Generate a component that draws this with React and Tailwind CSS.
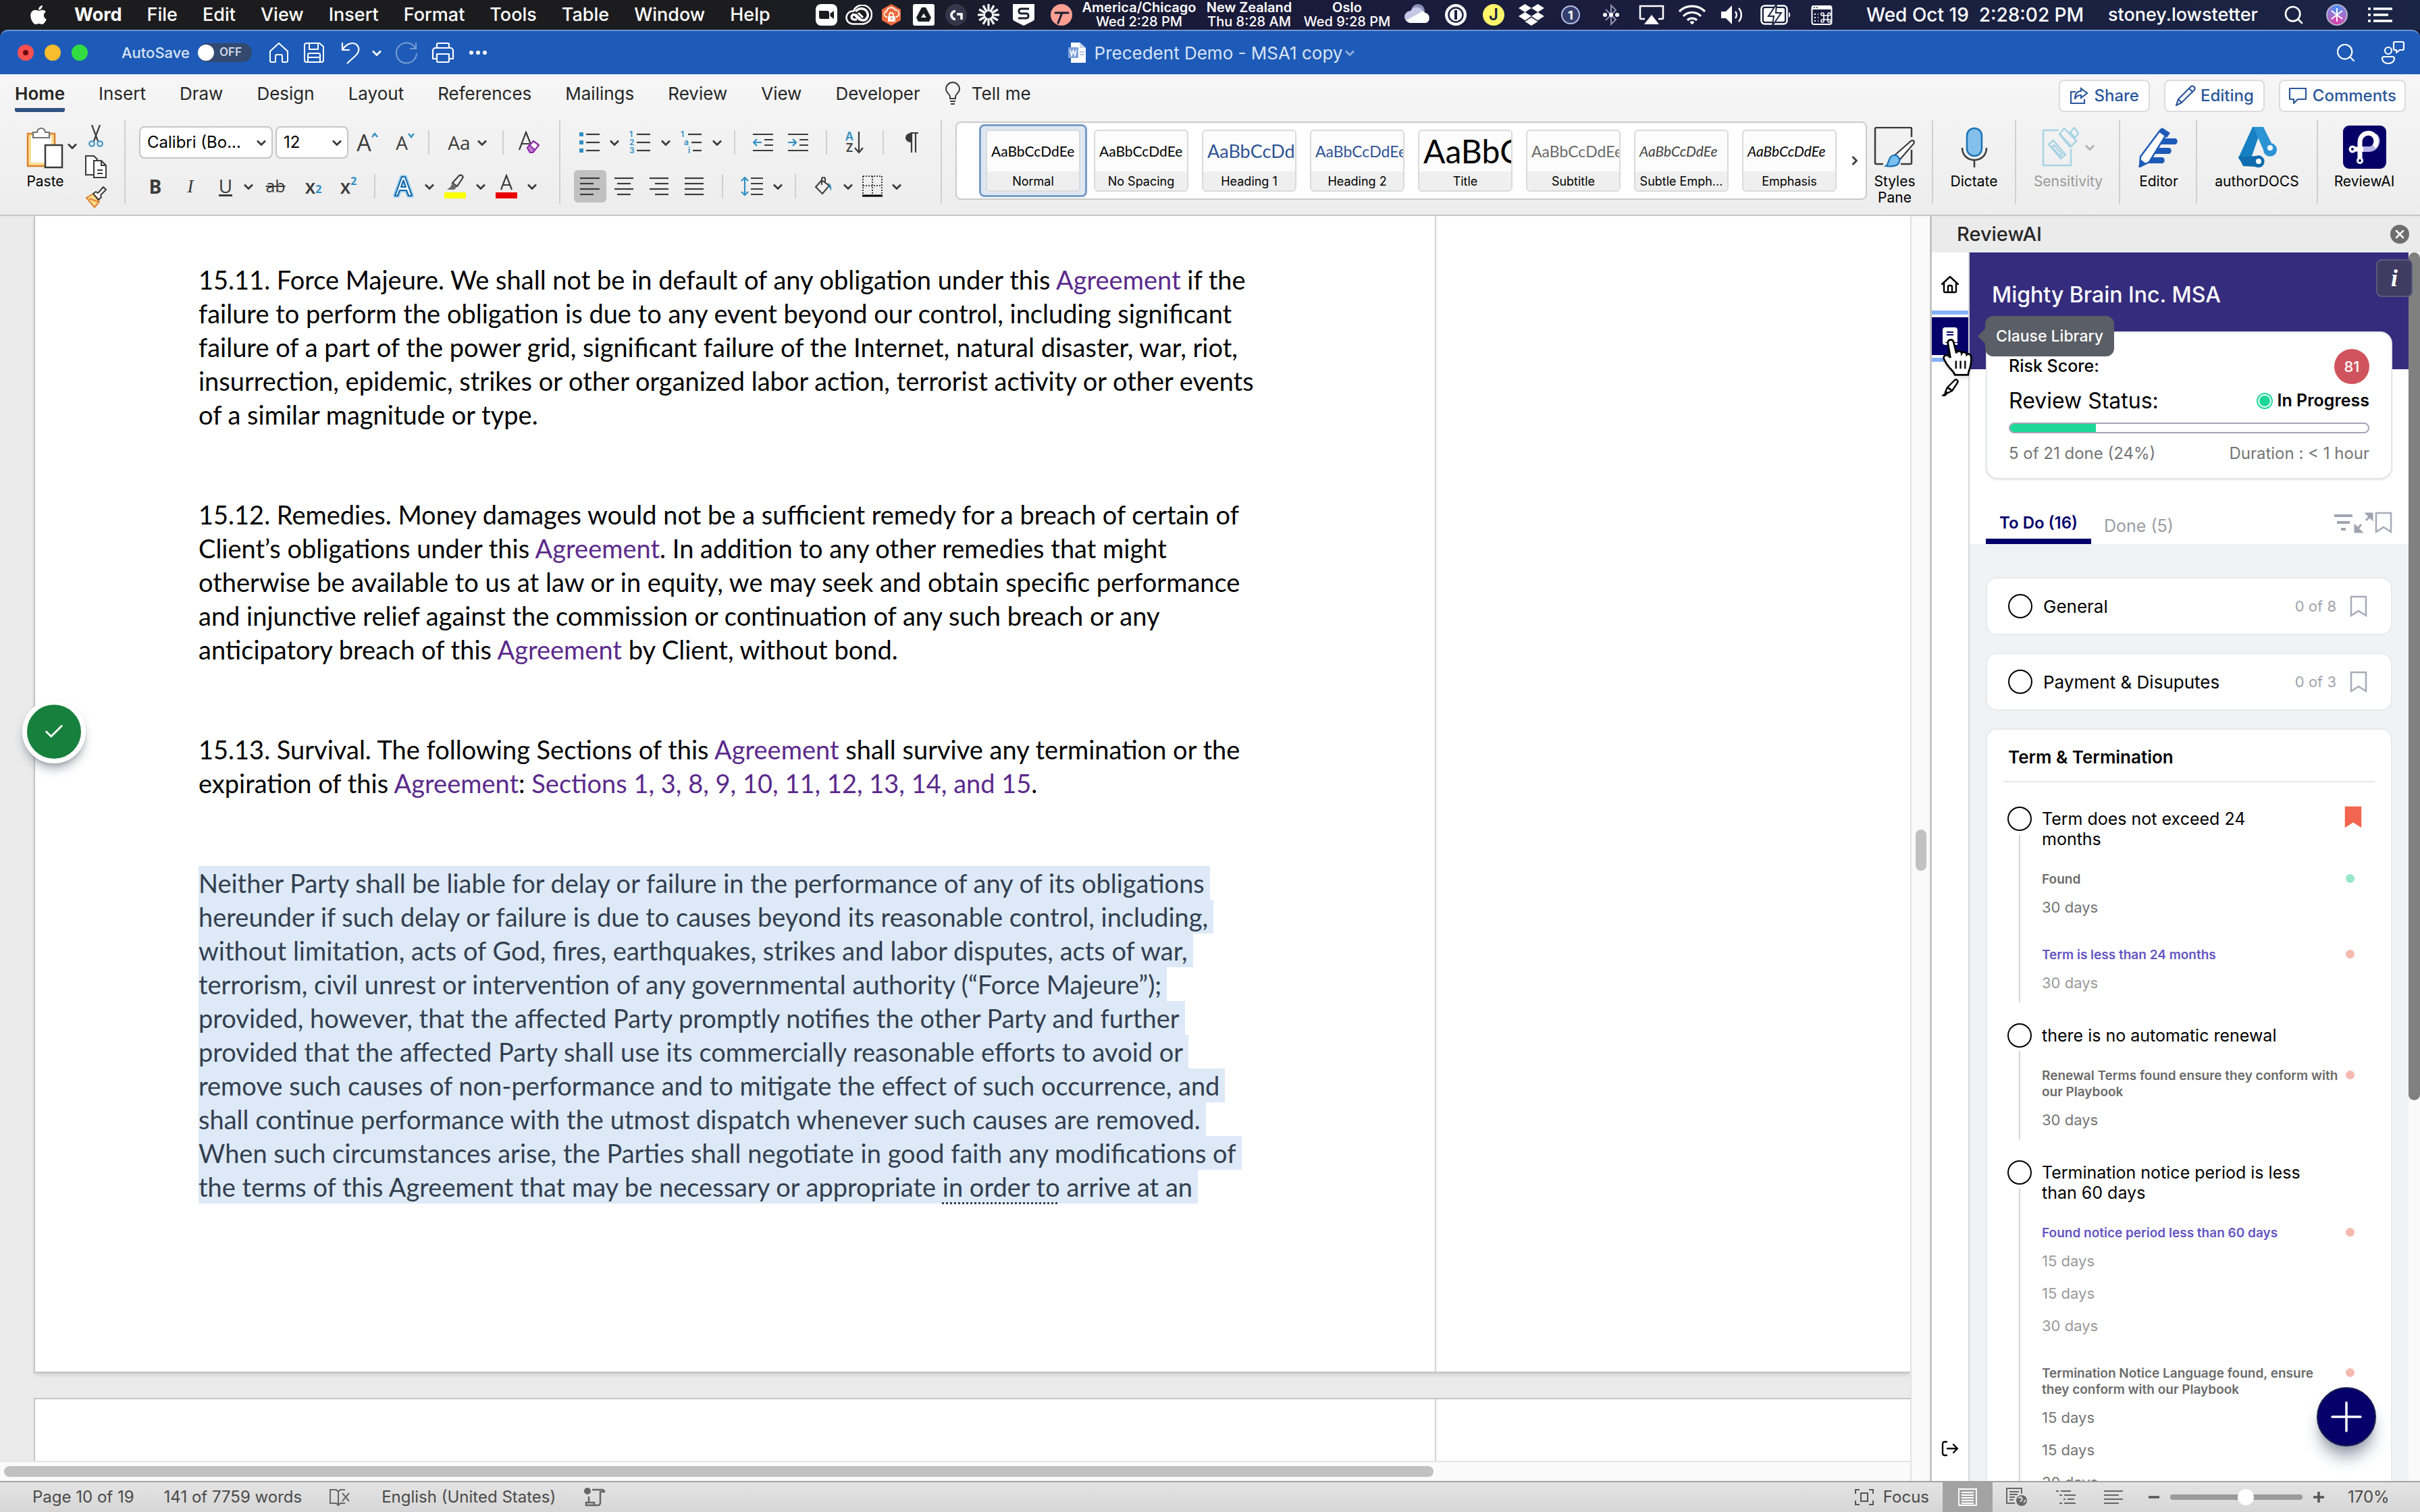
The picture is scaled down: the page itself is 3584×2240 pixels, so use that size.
import React from "react";
import { Search, Check, X } from "lucide-react";
import { FaApple, FaDropbox } from "react-icons/fa";

const menus = ["File", "Edit", "View", "Insert", "Format", "Tools", "Table", "Window", "Help"];

const clocks = [
  { city: "America/Chicago", time: "Wed 2:28 PM", width: "w-[174px]" },
  { city: "New Zealand", time: "Thu 8:28 AM", width: "w-[152px]" },
  { city: "Oslo", time: "Wed 9:28 PM", width: "w-[138px]" },
];

const tabs = ["Home", "Insert", "Draw", "Design", "Layout", "References", "Mailings", "Review", "View", "Developer"];

const styles = [
  { name: "Normal", sample: "text-[21px] text-black", selected: true },
  { name: "No Spacing", sample: "text-[21px] text-black" },
  { name: "Heading 1", sample: "text-[27px] text-[#2f5496]" },
  { name: "Heading 2", sample: "text-[23px] text-[#2f5496]" },
  { name: "Title", sample: "text-[48px] text-black" },
  { name: "Subtitle", sample: "text-[23px] text-[#6a6a6a]" },
  { name: "Subtle Emph...", sample: "text-[21px] italic text-[#404040]" },
  { name: "Emphasis", sample: "text-[21px] italic text-black" },
];

const todos = [
  {
    title: "Term does not exceed 24 months",
    flagged: true,
    findings: [
      { label: "Found", tone: "gray", dot: "bg-[#98e6c8]", values: ["30 days"] },
      { label: "Term is less than 24 months", tone: "violet", dot: "bg-[#f6b9b0]", values: ["30 days"] },
    ],
  },
  {
    title: "there is no automatic renewal",
    findings: [
      { label: "Renewal Terms found ensure they conform with our Playbook", tone: "gray", dot: "bg-[#f6b9b0]", values: ["30 days"] },
    ],
  },
  {
    title: "Termination notice period is less than 60 days",
    findings: [
      { label: "Found notice period less than 60 days", tone: "violet", dot: "bg-[#f6b9b0]", values: ["15 days", "15 days", "30 days"] },
      { label: "Termination Notice Language found, ensure they conform with our Playbook", tone: "gray", dot: "bg-[#f6b9b0]", values: ["15 days", "15 days", "30 days"] },
    ],
  },
];

function Slot({ children, className = "w-12" }) {
  return <div className={`flex shrink-0 items-center justify-center ${className}`}>{children}</div>;
}

/* ---------- menu bar ---------- */

function MenuBar() {
  return (
    <header className="flex h-[44px] shrink-0 items-center bg-linear-to-r from-[#1c1c1e] from-30% via-[#191a3a] via-50% to-[#1a2444] text-white">
      <nav className="flex items-center gap-[37px] pl-[41px] text-[27px] font-medium">
        <button aria-label="Apple menu"><FaApple size={32} /></button>
        <button className="font-bold">Word</button>
        {menus.map((m) => <button key={m}>{m}</button>)}
      </nav>

      <div className="ml-auto flex items-center pr-[27px]">
        <Slot>
          <svg width="32" height="32" viewBox="0 0 32 32">
            <rect width="32" height="32" rx="8" fill="#fff" />
            <path d="M5 10h12a3 3 0 0 1 3 3v9H8a3 3 0 0 1-3-3zM21.500 14l5.500-4v12l-5.500-4z" fill="#1b1b20" />
          </svg>
        </Slot>
        <Slot>
          <svg width="40" height="30" viewBox="0 0 40 30" fill="none">
            <path d="M11 28.500a9.500 9.500 0 0 1 0-19h1A14 14 0 1 1 26 28.500z" fill="#1b1b20" stroke="#fff" strokeWidth="2.500" />
            <path d="M15 10c4-5 12-6 16-1 5 6 1 14-5 14-3 0-5-1-7-3l-4-4c-2-2-4-2-5 0-2 3 0 6 3 6h4" stroke="#fff" strokeWidth="3.500" />
            <path d="M15 14l8 8M19 12l7 7" stroke="#fff" strokeWidth="3" />
          </svg>
        </Slot>
        <Slot>
          <svg width="30" height="32" viewBox="0 0 30 32" fill="none">
            <path d="M15 0l14 8v16l-14 8L1 24V8z" fill="#ee6c3f" />
            <path d="M9 19a4 4 0 0 1-1-8 7 7 0 0 1 13-2 5 5 0 0 1 1 10" stroke="#fff" strokeWidth="1.800" />
            <path d="M12 18v-2a3 3 0 0 1 6 0v2" stroke="#fff" strokeWidth="1.800" />
            <rect x="10" y="18" width="11" height="8" rx="1" fill="#fff" />
            <circle cx="15.500" cy="21.500" r="1.300" fill="#ee6c3f" />
          </svg>
        </Slot>
        <Slot>
          <svg width="32" height="32" viewBox="0 0 32 32">
            <rect width="32" height="32" rx="3" fill="#fff" />
            <path d="M13 5h6l8 15-3 6H8l-3-6z" fill="#1b1b24" />
            <path d="M16 14l4 6h-8z" fill="#fff" />
          </svg>
        </Slot>
        <Slot>
          <svg width="32" height="32" viewBox="0 0 32 32" fill="none">
            <circle cx="16" cy="16" r="16" fill="#35364a" />
            <path d="M15 10.500a6 6 0 0 0 0 12M17 15h7v8" stroke="#fff" strokeWidth="3.600" />
          </svg>
        </Slot>
        <Slot>
          <svg width="32" height="32" viewBox="0 0 32 32" stroke="#fff" strokeWidth="3.200">
            {[0, 30, 60, 90, 120, 150, 180, 210, 240, 270, 300, 330].map((a) => (
              <path key={a} d="M16 0v11" transform={`rotate(${a} 16 16)`} />
            ))}
          </svg>
        </Slot>
        <Slot className="w-14">
          <svg width="32" height="32" viewBox="0 0 32 32" fill="none">
            <path d="M0 0h32v22a4 4 0 0 1-2 3l-14 7-14-7a4 4 0 0 1-2-3z" fill="#fff" />
            <path d="M24 7H12a3 3 0 0 0-3 3v1a3 3 0 0 0 3 3h8a3 3 0 0 1 3 3v1a3 3 0 0 1-3 3H8" stroke="#1b1b2c" strokeWidth="3" />
          </svg>
        </Slot>
        <Slot className="w-14">
          <svg width="32" height="32" viewBox="0 0 32 32" fill="none" stroke="#1b1b30" strokeWidth="3" strokeLinecap="round">
            <circle cx="16" cy="16" r="16" fill="#fb9f93" stroke="none" />
            <path d="M7 13h19M17 13l-6 15" />
          </svg>
        </Slot>

        {clocks.map((c) => (
          <div key={c.city} className={`flex shrink-0 flex-col items-center text-[20px] leading-[21px] whitespace-nowrap ${c.width}`}>
            <span className="font-semibold">{c.city}</span>
            <span className="font-medium">{c.time}</span>
          </div>
        ))}

        <Slot className="ml-2 w-14">
          <svg width="40" height="32" viewBox="0 0 40 32">
            <circle cx="20" cy="10" r="10" fill="#8b90b8" />
            <path d="M9 28a9 9 0 0 1 0-18 11 11 0 0 1 20 3 8 8 0 0 1 2 15z" fill="#c3c8e6" />
            <path d="M3 24l23-13a9 9 0 0 1 5 2 8 8 0 0 1 1 15H8a9 9 0 0 1-5-4z" fill="#fff" />
          </svg>
        </Slot>
        <Slot className="w-14">
          <svg width="32" height="32" viewBox="0 0 32 32" fill="none">
            <circle cx="16" cy="16" r="16" fill="#fff" />
            <circle cx="16" cy="16" r="10.500" stroke="#1a2040" strokeWidth="2.500" />
            <rect x="14" y="9" width="4" height="14" fill="#1a2040" />
          </svg>
        </Slot>
        <Slot className="w-14">
          <span className="flex size-8 items-center justify-center rounded-full bg-[#fdf56a] text-[24px] font-semibold text-[#1a2040]">J</span>
        </Slot>
        <Slot className="w-14"><FaDropbox size={38} /></Slot>
        <Slot className="w-[60px]">
          <span className="flex size-7 items-center justify-center rounded-full border-2 border-[#b9c1e6] bg-[#353f6e] text-[18px] font-bold">1</span>
        </Slot>
        <Slot className="w-[60px]">
          <svg width="24" height="32" viewBox="0 0 24 32" fill="none">
            <path d="M4 8l15 15-7 7V2l7 7L4 24" stroke="#8d93b0" strokeWidth="2" />
            <circle cx="3" cy="16" r="3" fill="#fff" />
            <circle cx="12" cy="16" r="3" fill="#fff" />
            <circle cx="21" cy="16" r="3" fill="#fff" />
          </svg>
        </Slot>
        <Slot className="w-[60px]">
          <svg width="38" height="30" viewBox="0 0 38 30" fill="none">
            <path d="M9 21H3a1 1 0 0 1-1-1V2h34v18a1 1 0 0 1-1 1h-6" stroke="#fff" strokeWidth="2.500" />
            <path d="M19 15l11 14H8z" fill="#fff" />
          </svg>
        </Slot>
        <Slot className="w-[60px]">
          <svg width="42" height="30" viewBox="0 0 42 30" fill="none" stroke="#fff" strokeWidth="3.200">
            <path d="M2 10a27 27 0 0 1 38 0M8 17a18 18 0 0 1 26 0M14 23a10 10 0 0 1 14 0" />
            <path d="M21 29l-3-3a4 4 0 0 1 6 0z" fill="#fff" strokeWidth="1" />
          </svg>
        </Slot>
        <Slot className="w-[60px]">
          <svg width="36" height="30" viewBox="0 0 36 30" fill="none" stroke="#fff" strokeWidth="2.500">
            <path d="M1 10h7l9-9v28l-9-9H1z" fill="#fff" stroke="none" />
            <path d="M22 10a8 8 0 0 1 0 10M27 5a15 15 0 0 1 0 20" />
          </svg>
        </Slot>
        <Slot className="w-[68px]">
          <svg width="46" height="32" viewBox="0 0 46 32" fill="none">
            <rect x="1.500" y="2.500" width="38" height="27" rx="5" stroke="#fff" strokeWidth="2.500" />
            <rect x="5" y="6" width="31" height="20" rx="2" fill="#fff" />
            <path d="M42 12c3 1 3 7 0 8z" fill="#fff" />
            <path d="M24 0L12 18h8l-2 14 13-19h-8z" fill="#fff" stroke="#1a2343" strokeWidth="2" />
          </svg>
        </Slot>
        <Slot className="w-[68px]">
          <svg width="32" height="32" viewBox="0 0 32 32" fill="none">
            <rect x="1.500" y="3" width="29" height="27" rx="3" stroke="#fff" strokeWidth="2" />
            <path d="M1 8V5a3 3 0 0 1 3-3h24a3 3 0 0 1 3 3v3z" fill="#fff" />
            <path d="M4 5h2M8 5h2" stroke="#1a2343" strokeWidth="1.500" />
            <path d="M5 15h2M5 20h2M5 25h2M10 15h1M10 20h1M10 25h1" stroke="#fff" strokeWidth="2" />
            <path d="M19 17h6v6h-6zM19 17h-2a2 2 0 1 1 2-2zM25 17h2a2 2 0 1 0-2-2zM19 23h-2a2 2 0 1 0 2 2zM25 23h2a2 2 0 1 1-2 2z" stroke="#fff" strokeWidth="1.600" />
          </svg>
        </Slot>
        <span className="ml-8 w-[326px] text-[28px] font-medium whitespace-pre">Wed Oct 19  2:28:02 PM</span>
        <span className="ml-8 w-[243px] text-[27px] font-medium">stoney.lowstetter</span>
        <Slot className="w-16"><Search size={32} /></Slot>
        <Slot className="w-16">
          <span className="flex size-8 items-center justify-center rounded-full border-2 border-[#b9b3c9] bg-conic from-[#3e8ef2] via-[#d63aa8] to-[#3e8ef2]">
            <svg width="24" height="24" viewBox="0 0 24 24" stroke="#fff" strokeWidth="2">
              <path d="M12 2v20M4 6l16 12M4 18L20 6" />
            </svg>
          </span>
        </Slot>
        <Slot className="w-16">
          <svg width="36" height="22" viewBox="0 0 36 22" stroke="#fff" strokeWidth="3.500">
            <path d="M0 2h4M8 2h28M0 11h4M8 11h22M0 20h4M8 20h28" />
          </svg>
        </Slot>
      </div>
    </header>
  );
}

/* ---------- window title bar ---------- */

function TitleBar() {
  return (
    <div className="grid h-[66px] shrink-0 grid-cols-3 items-center rounded-t-xl border-t-2 border-[#6f95d6] bg-[#1e5bb8] text-white">
      <div className="flex items-center pl-[26px]">
        <div className="flex gap-[16px]">
          <button aria-label="Close" className="flex size-6 items-center justify-center rounded-full bg-[#fb4f50]">
            <span className="size-2 rounded-full bg-[#6b0d10]" />
          </button>
          <button aria-label="Minimize" className="size-6 rounded-full bg-[#f8be2f]" />
          <button aria-label="Zoom" className="size-6 rounded-full bg-[#31dd42]" />
        </div>
        <span className="ml-[50px] text-[22px] font-medium text-[#d8e3f5]">AutoSave</span>
        <button role="switch" aria-checked="false" aria-label="AutoSave" className="ml-3 flex h-7 w-20 items-center rounded-full bg-[#33496f]">
          <span className="size-6 rounded-full bg-white" />
          <span className="ml-2 text-[17px] font-semibold text-[#d0d8e6]">OFF</span>
        </button>
        <div className="ml-[24px] flex items-center">
          <button aria-label="Home">
            <svg width="32" height="32" viewBox="0 0 32 32" fill="none" stroke="#fff" strokeWidth="2" strokeLinejoin="round">
              <path d="M16 2l13 12v14a2 2 0 0 1-2 2h-5a1 1 0 0 1-1-1v-8a2 2 0 0 0-2-2h-6a2 2 0 0 0-2 2v8a1 1 0 0 1-1 1H5a2 2 0 0 1-2-2V14z" />
            </svg>
          </button>
          <button aria-label="Save" className="ml-[20px]">
            <svg width="32" height="32" viewBox="0 0 32 32" fill="none" stroke="#fff" strokeWidth="2" strokeLinejoin="round">
              <path d="M6 2h18l6 5v20a3 3 0 0 1-3 3H5a3 3 0 0 1-3-3V5a3 3 0 0 1 3-3zM9 2v9h13V2M7 30V19a2 2 0 0 1 2-2h14a2 2 0 0 1 2 2v11M7 23h18" />
            </svg>
          </button>
          <button aria-label="Undo" className="ml-[24px]">
            <svg width="30" height="34" viewBox="0 0 30 34" fill="none" stroke="#fff" strokeWidth="2.200">
              <path d="M2 2v11h11M2 13C8 3 18 1 23 5c5 5 4 11-1 16L9 33" />
            </svg>
          </button>
          <span className="ml-4"><Chevron light /></span>
          <button aria-label="Redo" className="ml-[20px] opacity-40">
            <svg width="34" height="34" viewBox="0 0 34 34" fill="none" stroke="#fff" strokeWidth="2">
              <path d="M31 2v9h-9M30 10A15 15 0 1 0 32 18" />
            </svg>
          </button>
          <button aria-label="Print" className="ml-[20px]">
            <svg width="34" height="32" viewBox="0 0 34 32" fill="none" stroke="#fff" strokeWidth="2.200" strokeLinejoin="round">
              <path d="M8 9V4a2 2 0 0 1 2-2h14a2 2 0 0 1 2 2v5M8 25H2V13a4 4 0 0 1 4-4h22a4 4 0 0 1 4 4v12h-6M8 18h18v10a2 2 0 0 1-2 2H10a2 2 0 0 1-2-2z" />
            </svg>
          </button>
          <button aria-label="More" className="ml-[22px] flex gap-1">
            <span className="size-[6px] rounded-full bg-white" />
            <span className="size-[6px] rounded-full bg-white" />
            <span className="size-[6px] rounded-full bg-white" />
          </button>
        </div>
      </div>
      <div className="flex items-center justify-center pl-1 text-[#d8e3f5]">
        <svg width="27" height="30" viewBox="0 0 27 30">
          <path d="M4 0h13l9 8v22H4z" fill="#fff" />
          <path d="M17 0l9 8h-9z" fill="#c8d3ea" />
          <rect y="7" width="15" height="16" rx="1" fill="#7fa2dc" />
          <path d="M3 11l2 8 2.500-7 2.500 7 2-8" fill="none" stroke="#fff" strokeWidth="1.600" />
          <path d="M17 14h7M17 18h7" stroke="#9bb4de" strokeWidth="1.500" />
        </svg>
        <span className="ml-3 text-[26px]">Precedent Demo - MSA1 copy</span>
        <span className="ml-1 opacity-50"><Chevron light /></span>
      </div>
      <div className="flex items-center justify-end gap-[36px] pr-[22px]">
        <button aria-label="Search"><Search size={32} strokeWidth={1.6} /></button>
        <button aria-label="Presence">
          <svg width="36" height="34" viewBox="0 0 36 34" fill="none" stroke="#fff" strokeWidth="2.200" strokeLinejoin="round">
            <circle cx="11" cy="14" r="5" />
            <path d="M2 26a3 3 0 0 1 3-3h12a3 3 0 0 1 3 3c0 4-4 7-9 7s-9-3-9-7zM19 3a2 2 0 0 1 2-2h11a2 2 0 0 1 2 2v8a2 2 0 0 1-2 2h-4l-5 4v-4h-2a2 2 0 0 1-2-2z" />
          </svg>
        </button>
      </div>
    </div>
  );
}

/* ---------- ribbon ---------- */

function Chevron({ light, faded }) {
  return (
    <svg width="14" height="9" viewBox="0 0 14 9" fill="none" stroke={light ? "#fff" : faded ? "#b0b0b0" : "#3b3b3b"} strokeWidth="2.800">
      <path d="M1 1.500l6 6 6-6" />
    </svg>
  );
}

function Tool({ label, width = "w-[52px]", active, children }) {
  return (
    <button aria-label={label} className={`flex h-12 shrink-0 items-center justify-center text-[#3b3b3b] ${width} ${active ? "rounded-md bg-[#c1c1c1]" : ""}`}>
      {children}
    </button>
  );
}

function More({ width = "w-5" }) {
  return <button aria-label="More options" className={`flex h-12 shrink-0 items-center justify-center ${width}`}><Chevron /></button>;
}

function Divider({ className = "mx-[15px]" }) {
  return <span className={`h-9 w-[2px] shrink-0 bg-[#d0d0d0] ${className}`} />;
}

function Lines({ rows }) {
  return (
    <svg width="30" height="28" viewBox="0 0 30 28" stroke="#3b3b3b" strokeWidth="2.200">
      {rows.map(([a, b], i) => <path key={i} d={`M${a} ${2 + i * 8}H${b}`} />)}
    </svg>
  );
}

function ListIcon({ marks }) {
  return (
    <svg width="32" height="38" viewBox="0 0 32 38">
      {marks.map((m, i) => (
        <g key={i}>
          {m === "" ? <rect x="1" y={4 + i * 12} width="6" height="6" fill="#2f8fc4" /> : <text x={m === "i" ? 11 : m === "a" ? 5 : 0} y={11 + i * 12} fontSize="12" fontWeight="600" fill="#2f8fc4">{m}</text>}
          <path d={`M${m === "a" ? 16 : m === "i" ? 18 : 11} ${7 + i * 12}H31`} stroke="#3b3b3b" strokeWidth="2.200" />
        </g>
      ))}
    </svg>
  );
}

function Picker({ label, value, width }) {
  return (
    <div className={`relative h-12 shrink-0 rounded-lg border-2 border-[#c6c6c6] bg-white ${width}`}>
      <select aria-label={label} className="h-full w-full appearance-none bg-transparent pl-2.5 text-[24px] text-black">
        <option>{value}</option>
      </select>
      <span className="pointer-events-none absolute top-[18px] right-2"><Chevron /></span>
    </div>
  );
}

function BigButton({ label, width, faded, last, children }) {
  return (
    <button className={`flex h-[124px] shrink-0 flex-col items-center pt-[10px] ${width} ${last ? "" : "border-r-2 border-[#d0d0d0]"}`}>
      <span className="flex h-[60px] items-center justify-center gap-2">{children}</span>
      <span className={`mt-[9px] text-[21px] leading-[24px] ${faded ? "text-[#9a9a9a]" : "text-black"}`}>{label}</span>
    </button>
  );
}

function GlyphA({ size, up }) {
  return (
    <span className="flex items-start">
      <span className={`font-['Open_Sans'] leading-[36px] ${size}`}>A</span>
      <svg width="10" height="14" viewBox="0 0 10 14" fill="none" stroke="#2f8fc4" strokeWidth="2.400">
        <path d={up ? "M1 10l4-5 4 5" : "M1 5l4 5 4-5"} />
      </svg>
    </span>
  );
}

function Ribbon() {
  return (
    <section className="shrink-0 border-b-2 border-[#c6c6c6] bg-linear-to-b from-[#f6f6f6] to-[#ededed]">
      <div className="flex h-[68px] items-start justify-between">
        <nav className="flex gap-[50px] pl-[22px] text-[26px] text-[#262626]">
          {tabs.map((t) => (
            <button key={t} className={`mt-[8px] flex h-[48px] items-center border-b-[6px] pb-[2px] ${t === "Home" ? "rounded-b-[3px] border-[#2f5283] font-semibold" : "border-transparent"}`}>{t}</button>
          ))}
          <button className="mt-[8px] -ml-[14px] flex h-[42px] items-center gap-[16px] pb-[2px]">
            <svg width="24" height="34" viewBox="0 0 24 34" fill="none" stroke="#3b3b3b" strokeWidth="2">
              <path d="M8 25v-3c0-3-6-6-6-11a10 10 0 0 1 20 0c0 5-6 8-6 11v3zM8 29h8M9 33h6" />
            </svg>
            Tell me
          </button>
        </nav>
        <div className="mt-2 flex gap-[21px] pr-[21px] text-[24px] font-medium text-[#2b579a]">
          <button className="flex h-12 items-center gap-2 rounded-lg border-2 border-[#dcdcdc] bg-white px-[14px]">
            <svg width="28" height="26" viewBox="0 0 28 26" fill="none" stroke="#2b579a" strokeWidth="2.200">
              <path d="M9 7H2v17h20v-6M17 2l9 7-9 7v-4c-5 0-8 2-9 6 0-8 3-12 9-12z" />
            </svg>
            Share
          </button>
          <button className="flex h-12 items-center gap-1.5 rounded-lg border-2 border-[#dcdcdc] bg-white px-[14px]">
            <svg width="32" height="32" viewBox="0 0 32 32" fill="none" stroke="#2b579a" strokeWidth="2.200" strokeLinejoin="round">
              <path d="M2 30l3-9L24 2c3-2 7 2 5 5L10 26zM21 5l6 6M5 21l5 5" />
            </svg>
            Editing
          </button>
          <button className="flex h-12 items-center gap-2 rounded-lg border-2 border-[#dcdcdc] bg-white px-[12px]">
            <svg width="28" height="26" viewBox="0 0 28 26" fill="none" stroke="#2b579a" strokeWidth="2.200" strokeLinejoin="round">
              <path d="M2 2h24v16H14l-6 6v-6H2z" />
            </svg>
            Comments
          </button>
        </div>
      </div>

      <div className="flex h-[140px] items-start">
        {/* clipboard */}
        <div className="flex h-[124px] w-[186px] shrink-0 border-r-2 border-[#d0d0d0] pl-[34px]">
          <button className="flex w-[66px] flex-col items-center pt-[10px]">
            <svg width="56" height="62" viewBox="0 0 56 62" fill="none">
              <path d="M2 10h40v48H2z" fill="#fcdf94" stroke="#e07f2c" strokeWidth="2.500" />
              <path d="M7 14h30v39H7z" fill="#fff" />
              <path d="M10 16V8h6a6 6 0 0 1 12 0h6v8z" fill="#fff" stroke="#737373" strokeWidth="2.200" />
              <path d="M28 27h25v33H28z" fill="#fff" stroke="#3b3b3b" strokeWidth="2.500" />
            </svg>
            <span className="mt-[7px] text-[21px] leading-[24px] text-black">Paste</span>
          </button>
          <span className="pt-[34px]"><Chevron /></span>
          <div className="ml-[12px] flex w-8 flex-col items-center gap-[12px] pt-[7px]">
            <button aria-label="Cut">
              <svg width="22" height="33" viewBox="0 0 22 33" fill="none">
                <path d="M5 0l9 24M17 0L8 24" stroke="#3b3b3b" strokeWidth="2.200" />
                <circle cx="5" cy="28" r="3.800" stroke="#2f8fc4" strokeWidth="2" />
                <circle cx="17" cy="28" r="3.800" stroke="#2f8fc4" strokeWidth="2" />
              </svg>
            </button>
            <button aria-label="Copy">
              <svg width="32" height="34" viewBox="0 0 32 34" fill="#fff" stroke="#3b3b3b" strokeWidth="2">
                <path d="M1 1h12l5 5v23H1z" />
                <path d="M13 8h11l7 7v18H13zM24 8v7h7M18 22h8M18 27h8" />
              </svg>
            </button>
            <button aria-label="Format painter">
              <svg width="32" height="32" viewBox="0 0 32 32" strokeLinejoin="round">
                <path d="M2 17l10-6 9 12-7 8z" fill="#fcdf94" stroke="#e07f2c" strokeWidth="2" />
                <path d="M6 18l13 5" stroke="#e07f2c" strokeWidth="2" />
                <path d="M12 11l4-3 3 2 8-9 4 4-8 8 1 3-4 4z" fill="#fff" stroke="#3b3b3b" strokeWidth="2" />
              </svg>
            </button>
          </div>
        </div>

        {/* font */}
        <div className="flex h-[124px] w-[644px] shrink-0 flex-col gap-[17px] border-r-2 border-[#d0d0d0] pt-[9px] pl-[20px]">
          <div className="flex items-center">
            <Picker label="Font" value="Calibri (Bo..." width="w-[198px]" />
            <span className="w-1" />
            <Picker label="Font size" value="12" width="w-[108px]" />
            <Tool label="Grow font" width="w-14"><GlyphA size="text-[34px]" up /></Tool>
            <Tool label="Shrink font" width="w-14"><GlyphA size="text-[28px]" /></Tool>
            <Divider className="ml-[6px] mr-[24px]" />
            <Tool label="Change case" width="w-10"><span className="font-['Open_Sans'] text-[28px]">Aa</span></Tool>
            <More width="w-7" />
            <Divider className="ml-[16px] mr-[16px]" />
            <Tool label="Clear formatting" width="w-11">
              <svg width="34" height="34" viewBox="0 0 34 34" fill="none">
                <path d="M2 28L12 2l8 20M6 19h11" stroke="#3b3b3b" strokeWidth="2.200" />
                <path d="M14 25l9-10 8 6-9 11h-4z" fill="#fff" stroke="#8d2aa3" strokeWidth="2.200" strokeLinejoin="round" />
                <path d="M14 25l3-4 8 7-3 4h-4z" fill="#c77bd6" stroke="#8d2aa3" strokeWidth="2" />
              </svg>
            </Tool>
          </div>
          <div className="flex items-center font-['Open_Sans'] text-[28px]">
            <Tool label="Bold" width="w-12"><b>B</b></Tool>
            <Tool label="Italic" width="w-14"><i className="font-['Liberation_Serif']">I</i></Tool>
            <Tool label="Underline" width="w-12"><span className="border-b-[3px] border-[#3b3b3b] leading-[26px]">U</span></Tool>
            <More />
            <Tool label="Strikethrough" width="w-[60px]"><span className="px-1 text-[25px] line-through decoration-2">ab</span></Tool>
            <Tool label="Subscript"><b className="font-semibold">x</b><sub className="text-[16px] font-bold text-[#2f8fc4]">2</sub></Tool>
            <Tool label="Superscript"><b className="font-semibold">x</b><sup className="text-[16px] font-bold text-[#2f8fc4]">2</sup></Tool>
            <Divider className="mx-3" />
            <Tool label="Text effects" width="w-[60px]">
              <svg width="34" height="34" viewBox="0 0 34 34" fill="none" strokeLinejoin="round">
                <path d="M4 31L14 3h5l10 28h-5l-3-8h-10l-3 8zM13 18h7l-3.500-10z" stroke="#9fd0f0" strokeWidth="6" />
                <path d="M4 31L14 3h5l10 28h-5l-3-8h-10l-3 8zM13 18h7l-3.500-10z" fill="#fff" stroke="#1469ab" strokeWidth="2.200" />
              </svg>
            </Tool>
            <More width="w-4" />
            <Tool label="Highlight" width="w-[60px]">
              <svg width="32" height="36" viewBox="0 0 32 36" fill="none">
                <path d="M12 13L22 2c3-2 7 1 5 4l-8 12z" stroke="#3b3b3b" strokeWidth="2.200" />
                <path d="M12 13l7 5-4 5H4l5-4z" fill="#6b6b6b" />
                <path d="M0 27h32v9H0z" fill="#fbff00" />
              </svg>
            </Tool>
            <More width="w-4" />
            <Tool label="Font color" width="w-[60px]">
              <svg width="32" height="36" viewBox="0 0 32 36" fill="none">
                <path d="M8 23L16 2l8 21M11 16h10" stroke="#3b3b3b" strokeWidth="2.200" />
                <path d="M0 27h32v9H0z" fill="#e80000" />
              </svg>
            </Tool>
            <More width="w-4" />
          </div>
        </div>

        {/* paragraph */}
        <div className="flex h-[124px] w-[565px] shrink-0 flex-col gap-[17px] border-r-2 border-[#d0d0d0] pt-[9px] pl-[16px]">
          <div className="flex items-center">
            <Tool label="Bullets" width="w-[54px]"><ListIcon marks={["", "", ""]} /></Tool>
            <More />
            <Tool label="Numbering" width="w-14"><ListIcon marks={["1", "2", "3"]} /></Tool>
            <More />
            <Tool label="Multilevel list" width="w-14"><ListIcon marks={["1", "a", "i"]} /></Tool>
            <More />
            <Divider />
            <Tool label="Decrease indent">
              <svg width="30" height="28" viewBox="0 0 30 28" fill="none" stroke="#3b3b3b" strokeWidth="2.200">
                <path d="M0 2h30M17 10h13M17 18h13M0 26h30" />
                <path d="M13 14H1M6 9l-5 5 5 5" stroke="#2f8fc4" />
              </svg>
            </Tool>
            <Tool label="Increase indent">
              <svg width="30" height="28" viewBox="0 0 30 28" fill="none" stroke="#3b3b3b" strokeWidth="2.200">
                <path d="M0 2h30M17 10h13M17 18h13M0 26h30" />
                <path d="M0 14h12M7 9l5 5-5 5" stroke="#2f8fc4" />
              </svg>
            </Tool>
            <Divider />
            <Tool label="Sort">
              <span className="flex flex-col text-[17px] leading-[17px] font-semibold">
                <span className="text-[#2f8fc4]">A</span>
                <span>Z</span>
              </span>
              <svg width="16" height="34" viewBox="0 0 16 34" fill="none" stroke="#3b3b3b" strokeWidth="2.200"><path d="M8 1v30M2 25l6 7 6-7" /></svg>
            </Tool>
            <Divider />
            <Tool label="Show formatting">
              <svg width="20" height="32" viewBox="0 0 20 32" fill="none">
                <path d="M10 2v14C-2 16-2 2 10 2z" fill="#3b3b3b" />
                <path d="M8 2h12M10 2v29M16 2v29" stroke="#3b3b3b" strokeWidth="2.200" />
              </svg>
            </Tool>
          </div>
          <div className="flex items-center pl-1">
            <Tool label="Align left" width="w-12" active><Lines rows={[[0, 29], [0, 20], [0, 29], [0, 20]]} /></Tool>
            <Tool label="Center"><Lines rows={[[1, 29], [5, 25], [1, 29], [5, 25]]} /></Tool>
            <Tool label="Align right"><Lines rows={[[1, 29], [9, 29], [1, 29], [9, 29]]} /></Tool>
            <Tool label="Justify"><Lines rows={[[1, 29], [1, 29], [1, 29], [1, 29]]} /></Tool>
            <Divider />
            <Tool label="Line spacing" width="w-14">
              <svg width="34" height="30" viewBox="0 0 34 30" fill="none" strokeWidth="2.200">
                <path d="M6 2v26M1 7l5-5 5 5M1 23l5 5 5-5" stroke="#2f8fc4" />
                <path d="M15 3h18M15 11h18M15 19h18M15 27h18" stroke="#3b3b3b" />
              </svg>
            </Tool>
            <More />
            <Divider />
            <Tool label="Shading" width="w-[52px]">
              <svg width="28" height="28" viewBox="0 0 28 28" fill="none">
                <path d="M11 5L2 15l10 10L22 13 11 5zM11 12V3c0-3 5-3 5 0v5" stroke="#3b3b3b" strokeWidth="2" />
                <path d="M20 9c4 1 6 4 5 12-2-4-4-6-3-8z" fill="#2f8fc4" />
              </svg>
            </Tool>
            <More />
            <Tool label="Borders" width="w-[52px]">
              <svg width="30" height="32" viewBox="0 0 30 32" fill="none" stroke="#3b3b3b" strokeWidth="2">
                <path d="M1 1h28M1 1v27M29 1v27M15 1v27M1 15h28" strokeDasharray="2 2" />
                <path d="M0 30h30" stroke="#000" strokeWidth="3" />
              </svg>
            </Tool>
            <More />
          </div>
        </div>

        {/* styles gallery */}
        <div className="mt-[2px] ml-[20px] flex h-[116px] min-w-0 flex-1 items-center rounded-lg border-2 border-[#cbcbcb] bg-white pl-[33px]">
          {styles.map((s) => (
            <button key={s.name} className={`flex h-[108px] w-40 shrink-0 rounded-lg border-[3px] px-[7px] py-[5px] ${s.selected ? "border-[#7a9cc8] bg-[#dfe8f2]" : "border-transparent"}`}>
              <span className="flex h-full w-full flex-col overflow-hidden rounded-md border-2 border-[#dadada] bg-[#fcfcfc]">
                <span className={`flex h-[60px] w-full items-center overflow-hidden px-[6px] font-['Lato'] whitespace-nowrap ${s.sample}`}>AaBbCcDdEe</span>
                <span className="flex flex-1 items-center justify-center bg-[#efefef] text-[18px] whitespace-nowrap text-black">{s.name}</span>
              </span>
            </button>
          ))}
          <button aria-label="More styles" className="mx-auto">
            <svg width="9" height="14" viewBox="0 0 9 14" fill="none" stroke="#3b3b3b" strokeWidth="2.800"><path d="M1.500 1l6 6-6 6" /></svg>
          </button>
        </div>

        <BigButton label={<>Styles<br />Pane</>} width="w-[98px] pr-[14px]">
          <svg width="62" height="60" viewBox="0 0 62 60" fill="none">
            <path d="M14 55H4a2 2 0 0 1-2-2V3a2 2 0 0 1 2-2h50a2 2 0 0 1 2 2v12M56 34v19a2 2 0 0 1-2 2H40" stroke="#3b3b3b" strokeWidth="2.500" />
            <path d="M31 42l24-21c4-2 6 0 4 4L39 48z" fill="#fff" stroke="#3b3b3b" strokeWidth="2.200" />
            <path d="M29 42c5-1 10 3 9 9-1 7-10 8-20 7 5-3 3-14 11-16z" fill="#79bff0" stroke="#1b72b4" strokeWidth="2.200" />
          </svg>
        </BigButton>
        <BigButton label="Dictate" width="w-[123px]">
          <svg width="40" height="60" viewBox="0 0 40 60" fill="none">
            <rect x="9" y="2" width="22" height="41" rx="11" fill="#83c1ec" stroke="#1b72b4" strokeWidth="2.500" />
            <path d="M2 31c0 24 36 24 36 0M20 49v11" stroke="#3b3b3b" strokeWidth="2.500" />
          </svg>
        </BigButton>
        <BigButton label="Sensitivity" width="w-[154px] pl-[2px]" faded>
          <svg width="56" height="60" viewBox="0 0 56 60" fill="none" stroke="#a9d3e4" strokeWidth="2.500">
            <path d="M25 5H2v52h41V33" />
            <path d="M17 20l-7 6 18 21 7-6zM18 27l-3 3 12 13 3-3z" />
            <path d="M33 2l-7 9 16 19 9-9zM42 8l6-7 6 9-5 6zM28 12l15 16" />
          </svg>
          <Chevron faded />
        </BigButton>
        <BigButton label="Editor" width="w-[114px] pl-[2px]">
          <svg width="62" height="60" viewBox="0 0 62 60">
            <path d="M36 17h20a5 5 0 0 1 0 9H31zM27 31h20a5 5 0 0 1 0 9H22zM20 45h17a5 5 0 0 1 0 9H10z" fill="#1e5bb8" />
            <path d="M4 44L34 4l9 6-26 42-14 7z" fill="#fff" stroke="#1e5bb8" strokeWidth="2.500" />
            <path d="M36 1l12 8-5 7-11-8zM1 60l3-12 8 6z" fill="#1e5bb8" />
          </svg>
        </BigButton>
        <BigButton label="authorDOCS" width="w-[179px]">
          <svg width="58" height="60" viewBox="0 0 58 60">
            <path d="M22 0h14L20 46l-6 12h-4L1 46z" fill="#1581c4" />
            <path d="M24 0h14l12 24a10 10 0 1 1-12 10L27 9z" fill="#2b94d4" />
            <path d="M1 44l14 0 12-1a9 9 0 1 1-1 16L8 58z" fill="#0f6cae" />
            <circle cx="48" cy="31" r="4" fill="#fff" />
            <circle cx="31" cy="51" r="4" fill="#fff" />
          </svg>
        </BigButton>
        <BigButton label="ReviewAI" width="w-[151px] pr-[14px]" last>
          <svg width="64" height="64" viewBox="0 0 64 64" fill="none">
            <rect width="64" height="64" rx="9" fill="#050067" />
            <path d="M25 35h14a13 12 0 0 0 8-20" stroke="#b9b4e6" strokeWidth="8" />
            <path d="M25 50V25c0-18 24-18 24-2 0 3-1 6-3 8M14 35h16" stroke="#fff" strokeWidth="7" />
            <circle cx="25" cy="52" r="5" fill="#fff" />
            <circle cx="25" cy="52" r="2" fill="#050067" />
            <circle cx="14" cy="35" r="5.500" fill="#fff" />
            <circle cx="14" cy="35" r="2" fill="#050067" />
          </svg>
        </BigButton>
      </div>
    </section>
  );
}

/* ---------- document ---------- */

function Term({ children }) {
  return <a href="#defined-term" className="text-[#5b2a8c]">{children}</a>;
}

function Selected({ children }) {
  return <span className="w-max bg-[#dde9f7] pr-2 text-[#333e4f]">{children}</span>;
}

function DocumentArea() {
  return (
    <main className="relative flex min-w-0 flex-1 flex-col overflow-hidden bg-[#ebebeb]">
      <div className="flex min-h-0 flex-1 flex-col gap-[37px] overflow-hidden pl-[50px]">
        <article className="flex shrink-0 border-b-2 border-l-2 border-[#c4c4c4] bg-white shadow-md">
          <div className="flex-1 space-y-[98px] pt-[69px] pb-[249px] pl-[242px] font-['Lato'] text-[38px] leading-[50px] whitespace-nowrap text-black">
            <p>
              15.11. Force Majeure. We shall not be in default of any obligation under this <Term>Agreement</Term> if the<br />
              failure to perform the obligation is due to any event beyond our control, including significant<br />
              failure of a part of the power grid, significant failure of the Internet, natural disaster, war, riot,<br />
              insurrection, epidemic, strikes or other organized labor action, terrorist activity or other events<br />
              of a similar magnitude or type.
            </p>
            <p>
              15.12. Remedies. Money damages would not be a sufficient remedy for a breach of certain of<br />
              Client’s obligations under this <Term>Agreement</Term>. In addition to any other remedies that might<br />
              otherwise be available to us at law or in equity, we may seek and obtain specific performance<br />
              and injunctive relief against the commission or continuation of any such breach or any<br />
              anticipatory breach of this <Term>Agreement</Term> by Client, without bond.
            </p>
            <p>
              15.13. Survival. The following Sections of this <Term>Agreement</Term> shall survive any termination or the<br />
              expiration of this <Term>Agreement</Term>: <Term>Sections 1, 3, 8, 9, 10, 11, 12, 13, 14, and 15</Term>.
            </p>
            <p className="flex flex-col">
              <Selected>Neither Party shall be liable for delay or failure in the performance of any of its obligations</Selected>
              <Selected>hereunder if such delay or failure is due to causes beyond its reasonable control, including,</Selected>
              <Selected>without limitation, acts of God, fires, earthquakes, strikes and labor disputes, acts of war,</Selected>
              <Selected>terrorism, civil unrest or intervention of any governmental authority (“Force Majeure”);</Selected>
              <Selected>provided, however, that the affected Party promptly notifies the other Party and further</Selected>
              <Selected>provided that the affected Party shall use its commercially reasonable efforts to avoid or</Selected>
              <Selected>remove such causes of non-performance and to mitigate the effect of such occurrence, and</Selected>
              <Selected>shall continue performance with the utmost dispatch whenever such causes are removed.</Selected>
              <Selected>When such circumstances arise, the Parties shall negotiate in good faith any modifications of</Selected>
              <Selected>
                the terms of this Agreement that may be necessary or appropriate{" "}
                <span className="underline decoration-dotted decoration-3 underline-offset-8">in order to</span> arrive at an
              </Selected>
            </p>
          </div>
          <div className="w-[704px] shrink-0 border-l-2 border-[#d2d2d2]" />
        </article>
        <article className="flex flex-1 border-t-2 border-l-2 border-[#c4c4c4] bg-white">
          <div className="flex-1" />
          <div className="w-[704px] shrink-0 border-l-2 border-[#d2d2d2]" />
        </article>
      </div>

      <div className="h-[30px] shrink-0 border-t-2 border-[#e4e4e4] bg-[#fafafa] pt-[6px] pl-[6px]">
        <div className="h-4 w-[75%] rounded-full bg-[#c1c1c1]" />
      </div>

      <button aria-label="Accept" className="absolute top-[717px] left-[33px] flex size-[94px] items-center justify-center rounded-full border-[7px] border-white bg-[#17803d] text-white shadow-lg shadow-gray-500/60">
        <Check size={34} strokeWidth={2} />
      </button>
    </main>
  );
}

/* ---------- task pane ---------- */

function Bookmark({ filled }) {
  return (
    <svg width="26" height="32" viewBox="0 0 26 32" fill={filled ? "#f2654f" : "none"} stroke={filled ? "#f2654f" : "#a6abb8"} strokeWidth="2.500">
      <path d="M2 2h22v28l-11-7-11 7z" />
    </svg>
  );
}

function Circle({ label, id }) {
  return <input id={id} type="checkbox" aria-label={label} className="size-9 shrink-0 appearance-none rounded-full border-2 border-black bg-white" />;
}

function GroupCard({ id, name, count }) {
  return (
    <div className="flex h-[86px] shrink-0 items-center rounded-2xl border-2 border-[#e8e9ec] bg-white pr-[35px] pl-[31px]">
      <Circle id={id} label={name} />
      <label htmlFor={id} className="ml-4 text-[26px] text-black">{name}</label>
      <span className="mr-[20px] ml-auto text-[22px] text-[#a0a3aa]">{count}</span>
      <button aria-label={`Bookmark ${name}`}><Bookmark /></button>
    </div>
  );
}

function Finding({ finding, first }) {
  const violet = finding.tone === "violet";
  return (
    <div className={first ? "pt-[33px]" : "pt-[45px]"}>
      <div className="flex items-start justify-between">
        <p className={`w-[442px] text-[19px] leading-[24px] font-semibold ${violet ? "text-[#6354c2]" : "text-[#6a6a6a]"}`}>{finding.label}</p>
        <span className={`mt-1 mr-[11px] size-[13px] shrink-0 rounded-full ${finding.dot}`} />
      </div>
      <ul className={`flex flex-col gap-[20px] pt-[15px] text-[22px] leading-[28px] ${violet ? "text-[#9a9a9a]" : "text-[#757575]"}`}>
        {finding.values.map((v, i) => <li key={i}>{v}</li>)}
      </ul>
    </div>
  );
}

function Todo({ todo }) {
  return (
    <li className="flex gap-[15px]">
      <div className="flex w-9 shrink-0 flex-col items-center">
        <Circle label={todo.title} />
        <span className="mt-[5px] w-[2px] flex-1 bg-[#d5d5d5]" />
      </div>
      <div className="flex-1 pt-[3px] pb-[15px]">
        <div className="flex items-start justify-between">
          <h3 className="w-[392px] text-[25px] leading-[30px] text-black">{todo.title}</h3>
          {todo.flagged && <button aria-label="Remove bookmark" className="-mt-1 -mb-2"><Bookmark filled /></button>}
        </div>
        {todo.findings.map((f, i) => <Finding key={f.label} finding={f} first={i === 0} />)}
      </div>
    </li>
  );
}

function Rail() {
  return (
    <nav className="flex w-[56px] shrink-0 flex-col items-center border-r-2 border-[#d5d7da] bg-white">
      <button aria-label="Home" className="flex h-[86px] items-center pt-[10px]">
        <svg width="28" height="28" viewBox="0 0 28 28" fill="none" stroke="#000" strokeWidth="2.400" strokeLinejoin="round" strokeLinecap="round">
          <path d="M2 13L14 2l12 11M5 11v12a2 2 0 0 0 2 2h14a2 2 0 0 0 2-2V11M11 25v-8a2 2 0 0 1 2-2h2a2 2 0 0 1 2 2v8" />
        </svg>
      </button>
      <div className="relative w-full border-y-[6px] border-[#86b2f8] py-1">
        <button aria-label="Clause Library" className="flex h-14 w-full items-center justify-center bg-[#05006a]">
          <svg width="22" height="26" viewBox="0 0 22 26">
            <path d="M4 0h14a4 4 0 0 1 4 4v18H4v1h18v3H4a4 4 0 0 1-4-4V4a4 4 0 0 1 4-4z" fill="#fff" />
            <path d="M6 7h10M6 11h10" stroke="#05006a" strokeWidth="1.800" />
          </svg>
        </button>
        <svg className="absolute top-[36px] left-[13px] z-20 drop-shadow-md" width="54" height="58" viewBox="0 0 32 34">
          <path d="M6.500 4.200c-.5-2 .6-3.400 2-3.600 1.500-.2 2.600.8 3 2.400l2.300 9.400c.3-1.400 1.500-2 2.700-1.800 1.200.2 1.900 1 2 2 .5-.9 1.600-1.300 2.600-1 1 .3 1.700 1.100 1.800 2.100.6-.6 1.500-.8 2.400-.4 1.100.5 1.600 1.500 1.600 3 0 4-.3 7-1.600 10.400-.6 1.600-1 2.600-1.200 4.800H12.600c-1-2.600-3-4.400-5-6.600-1.800-2-3.400-4.600-4.600-7.200-.8-1.800.2-3.200 1.600-3.500 1.400-.2 2.600.4 4 2.200z" fill="#fff" stroke="#000" strokeWidth="1.600" />
          <path d="M13.500 19v7M17.500 19v7M21.500 19v7" stroke="#000" strokeWidth="1.400" />
        </svg>
        <div role="tooltip" className="absolute top-[2px] left-[79px] z-10 flex h-[60px] w-[191px] items-center justify-center rounded-[12px] bg-[#5a5e66] text-[23px] font-medium whitespace-nowrap text-white">
          <span className="absolute -left-[11px] border-y-[12px] border-r-[12px] border-y-transparent border-r-[#5a5e66]" />
          Clause Library
        </div>
      </div>
      <button aria-label="Annotate" className="mt-[24px]">
        <svg width="28" height="28" viewBox="0 0 28 28" fill="none" stroke="#000" strokeWidth="2.400" strokeLinejoin="round">
          <path d="M10 14L21 3c2-2 6 1 4 4l-8 12zM10 14l-3 7 4 1 6-3-3-3z" />
          <path d="M8 20l3 3-4 4H1z" fill="#000" stroke="none" />
        </svg>
      </button>
      <button aria-label="Log out" className="mt-auto mb-[36px]">
        <svg width="26" height="24" viewBox="0 0 26 24" fill="none" stroke="#000" strokeWidth="2.400" strokeLinecap="round" strokeLinejoin="round">
          <path d="M8 2H5a3 3 0 0 0-3 3v14a3 3 0 0 0 3 3h3M9 12h15M18 6l6 6-6 6" />
        </svg>
      </button>
    </nav>
  );
}

function TaskPane() {
  return (
    <aside className="relative flex w-[726px] shrink-0 flex-col border-l-[3px] border-[#c4c4c4] bg-white">
      <div className="flex h-[54px] shrink-0 items-center justify-between bg-[#ebebeb] pr-[16px] pl-[37px]">
        <h2 className="text-[29px] font-medium text-[#262626]">ReviewAI</h2>
        <button aria-label="Close pane" className="flex size-7 items-center justify-center rounded-full bg-[#6e6e6e] text-white"><X size={20} strokeWidth={3} /></button>
      </div>

      <div className="flex min-h-0 flex-1">
        <Rail />
        <div className="flex min-w-0 flex-1 flex-col overflow-hidden bg-white">
          <div className="h-[173px] shrink-0 bg-[#352c7e] pt-[42px] pl-[33px]">
            <h1 className="text-[32px] leading-[42px] font-medium text-white">Mighty Brain Inc. MSA</h1>
          </div>

          <section className="mx-6 -mt-[56px] shrink-0 rounded-[18px] border-2 border-[#e6e7ea] bg-white px-[32px] pt-[24px] pb-[20px] text-black shadow-sm">
            <div className="flex items-center justify-between">
              <span className="text-[25px] font-medium">Risk Score:</span>
              <span className="flex size-[52px] items-center justify-center rounded-full bg-[#d0545d] text-[22px] font-medium text-white">81</span>
            </div>
            <div className="mt-[5px] flex items-center justify-between">
              <span className="text-[32px] leading-[40px]">Review Status:</span>
              <span className="flex items-center gap-[7px] text-[25px] font-semibold">
                <span className="flex size-6 items-center justify-center rounded-full border-2 border-[#1cd898]">
                  <span className="size-4 rounded-full bg-[#1cd898]" />
                </span>
                In Progress
              </span>
            </div>
            <div role="progressbar" aria-valuenow="24" className="mt-[12px] h-4 overflow-hidden rounded-full border-2 border-[#a5a5b8]">
              <div className="h-full w-[24%] bg-[#1cd898]" />
            </div>
            <div className="mt-[14px] flex items-center justify-between text-[24px] leading-[32px] text-[#757575]">
              <span>5 of 21 done (24%)</span>
              <span>Duration : &lt; 1 hour</span>
            </div>
          </section>

          <div className="mx-6 flex h-[96px] shrink-0 items-end">
            <button className="border-b-8 border-[#05006a] px-[20px] pb-2 text-[24px] leading-[30px] font-semibold text-[#05006a]">To Do (16)</button>
            <button className="border-b-8 border-transparent px-[19px] pb-1 text-[25px] leading-[30px] text-[#9a9ca3]">Done (5)</button>
            <div className="mb-[16px] ml-auto flex items-center text-[#9fa4b2]">
              <button aria-label="Filter">
                <svg width="28" height="28" viewBox="0 0 28 28" stroke="#9fa4b2" strokeWidth="4"><path d="M0 4h27M4 14h19M10 24h7" /></svg>
              </button>
              <button aria-label="Expand">
                <svg width="32" height="32" viewBox="0 0 32 32" fill="#9fa4b2" stroke="#9fa4b2" strokeWidth="3">
                  <path d="M19 13l9-9M28 11V3h-8zM12 19l-8 9M3 21v9h9z" />
                </svg>
              </button>
              <button aria-label="Bookmarks"><Bookmark /></button>
            </div>
          </div>

          <div className="flex min-h-0 flex-1 flex-col gap-[26px] overflow-hidden bg-[#f1f2f5] px-6 pt-[49px]">
            <GroupCard id="general" name="General" count="0 of 8" />
            <GroupCard id="payment" name="Payment & Disuputes" count="0 of 3" />
            <section className="shrink-0 rounded-t-2xl border-2 border-[#e8e9ec] bg-white px-6">
              <h2 className="border-b-2 border-[#e6e6e6] pt-[24px] pb-[18px] pl-[7px] text-[26px] leading-[34px] font-semibold text-black">Term &amp; Termination</h2>
              <ul className="flex flex-col gap-[31px] pt-[36px] pr-[19px] pl-[6px]">
                {todos.map((t) => <Todo key={t.title} todo={t} />)}
              </ul>
            </section>
          </div>
        </div>
        <div className="w-[17px] shrink-0 bg-[#fafafa]">
          <div className="h-[69%] rounded-full bg-[#808080]" />
        </div>
      </div>

      <button aria-label="Info" className="absolute top-[64px] right-[11px] flex h-[56px] w-[54px] items-center justify-center rounded-lg border-2 border-[#5d587c] bg-[#403b60] font-['Liberation_Serif'] text-[36px] font-bold text-white italic">i</button>
      <button aria-label="Add" className="absolute right-[65px] bottom-[51px] flex size-[88px] items-center justify-center rounded-full border-2 border-[#1b2050] bg-[#05006a] shadow-xl shadow-gray-400">
        <svg width="46" height="46" viewBox="0 0 46 46" stroke="#fff" strokeWidth="3.500" strokeLinecap="round"><path d="M23 2v42M2 23h42" /></svg>
      </button>
    </aside>
  );
}

/* ---------- status bar ---------- */

function StatusBar() {
  return (
    <footer className="flex h-[46px] shrink-0 items-center border-t-2 border-[#a3a3a3] bg-linear-to-b from-[#e4e4e4] to-[#d6d6d6] pl-[48px] text-[24px] text-[#4a4a4a]">
      <span>Page 10 of 19</span>
      <span className="ml-[44px]">141 of 7759 words</span>
      <svg className="ml-[40px]" width="32" height="28" viewBox="0 0 32 28" fill="none" stroke="#666" strokeWidth="2">
        <path d="M24 3h-7l-3 3-3-3H2v20h9l3 3 3-3h7M14 6v20M20 8l10 12M30 8L20 20" />
      </svg>
      <span className="ml-[46px]">English (United States)</span>
      <svg className="ml-[42px]" width="32" height="28" viewBox="0 0 32 28" fill="none" stroke="#666" strokeWidth="2.500">
        <circle cx="5" cy="5" r="5" fill="#666" stroke="none" />
        <path d="M12 3h15a3 3 0 0 1 3 3h-6v17a4 4 0 0 1-4 3H3v-4h12v4M7 13v9" />
      </svg>

      <div className="ml-auto flex h-full items-center">
        <button className="flex items-center gap-[14px]">
          <svg width="28" height="24" viewBox="0 0 28 24" fill="none" stroke="#555" strokeWidth="2">
            <path d="M7 1H1v6M21 1h6v6M7 23H1v-6M21 23h6v-6M9 6h10v12H9z" />
          </svg>
          Focus
        </button>
        <button aria-label="Print layout" className="ml-[20px] flex h-full w-[74px] items-center justify-center bg-[#a3a3a3]">
          <svg width="28" height="26" viewBox="0 0 28 26" fill="none" stroke="#fff" strokeWidth="2"><path d="M1 1h26v24H1zM5 6h18M5 10h18M5 14h18M5 18h18M5 22h18" strokeWidth="1.800" /></svg>
        </button>
        <button aria-label="Web layout" className="ml-[20px]">
          <svg width="32" height="28" viewBox="0 0 32 28" fill="none" stroke="#666" strokeWidth="2">
            <path d="M13 23H1V1h22v8M5 6h14M5 10h12M5 14h8M5 18h6" />
            <circle cx="23" cy="19" r="8" fill="#666" stroke="none" />
            <path d="M18 15l4-1 2 3-3 4M26 22l3-4" stroke="#ddd" />
          </svg>
        </button>
        <button aria-label="Outline" className="ml-[42px]">
          <svg width="30" height="22" viewBox="0 0 30 22" stroke="#666" strokeWidth="2.200"><path d="M0 2h4M7 2h15M5 8h4M12 8h17M11 14h3M17 14h10M5 20h4M12 20h17" /></svg>
        </button>
        <button aria-label="Draft" className="ml-[41px]">
          <svg width="28" height="22" viewBox="0 0 28 22" stroke="#666" strokeWidth="2.200"><path d="M0 2h28M0 8h22M0 14h28M0 20h22" /></svg>
        </button>
        <button aria-label="Zoom out" className="ml-[38px]">
          <svg width="16" height="16" viewBox="0 0 16 16" stroke="#555" strokeWidth="3.500"><path d="M0 8h16" /></svg>
        </button>
        <input
          type="range"
          aria-label="Zoom"
          min="0"
          max="100"
          defaultValue="58"
          className="mx-[16px] h-2 w-[196px] appearance-none rounded-full bg-[#9a9a9a] [&::-webkit-slider-thumb]:size-6 [&::-webkit-slider-thumb]:appearance-none [&::-webkit-slider-thumb]:rounded-full [&::-webkit-slider-thumb]:bg-white"
        />
        <button aria-label="Zoom in">
          <svg width="16" height="16" viewBox="0 0 16 16" stroke="#555" strokeWidth="3.500"><path d="M0 8h16M8 0v16" /></svg>
        </button>
        <span className="w-[142px] pl-[35px]">170%</span>
      </div>
    </footer>
  );
}

export default function App() {
  return (
    <div className="flex h-screen flex-col overflow-hidden bg-[#16182c] font-['Inter',sans-serif]">
      <MenuBar />
      <TitleBar />
      <Ribbon />
      <div className="flex min-h-0 flex-1">
        <DocumentArea />
        <div className="w-[29px] shrink-0 border-l-2 border-[#e2e2e2] bg-[#fafafa] pt-[909px]">
          <div className="mx-auto h-[61px] w-4 rounded-full bg-[#c1c1c1]" />
        </div>
        <TaskPane />
      </div>
      <StatusBar />
    </div>
  );
}
